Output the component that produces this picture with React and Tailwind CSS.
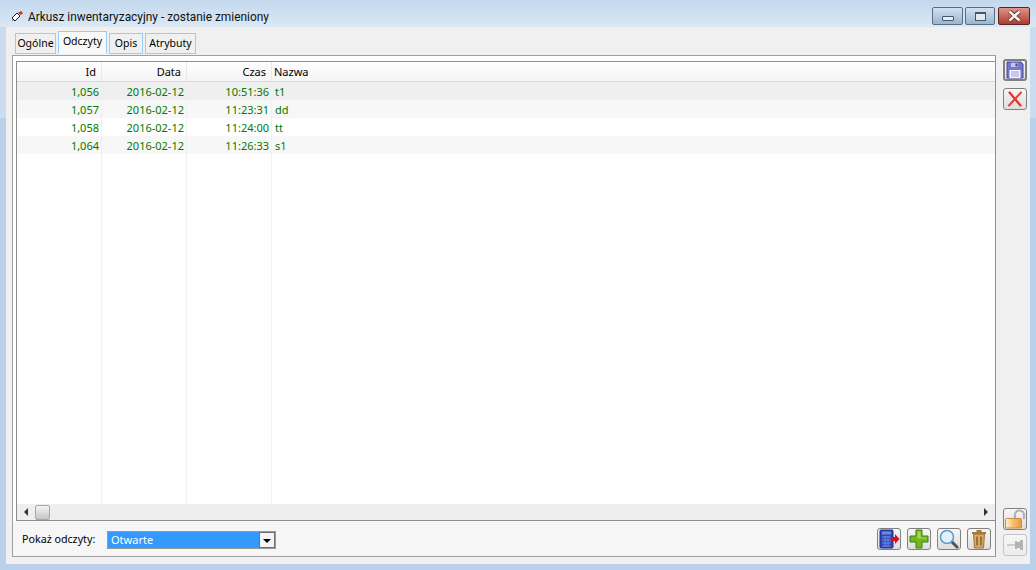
const rows = [
  { id: '1,056', date: '2016-02-12', time: '10:51:36', name: 't1', bg: 'bg-[#efefef]' },
  { id: '1,057', date: '2016-02-12', time: '11:23:31', name: 'dd', bg: 'bg-[#f7f7f7]' },
  { id: '1,058', date: '2016-02-12', time: '11:24:00', name: 'tt', bg: 'bg-white' },
  { id: '1,064', date: '2016-02-12', time: '11:26:33', name: 's1', bg: 'bg-[#f7f7f7]' },
];

const ToolButton = ({ children, className = '' }) => (
  <div
    className={`flex items-center justify-center w-[24px] h-[22px] shrink-0 rounded-[3px] border border-[#808080] bg-gradient-to-b from-[#f6f6f6] to-[#dedede] ${className}`}
  >
    {children}
  </div>
);

const SaveIcon = () => (
  <svg width="18" height="18" viewBox="0 0 18 18">
    <path d="M1 1h14l2 2v14H1z" fill="#7477d2" stroke="#4346a0" />
    <rect x="4.500" y="1.500" width="8" height="5" fill="#c4c6ee" stroke="#5f62b8" strokeWidth="0.6" />
    <rect x="9.500" y="2.500" width="2" height="3" fill="#4346a0" />
    <rect x="3.500" y="9" width="11" height="8" fill="#f6f6fc" />
    <path d="M5 11h8M5 13h8M5 15h8" stroke="#9a9ccd" />
  </svg>
);

const CancelIcon = () => (
  <svg width="16" height="16" viewBox="0 0 16 16">
    <path d="M2.500 1.500l11 13" stroke="#e4322a" strokeWidth="2.200" strokeLinecap="round" />
    <path d="M14 1.500L2 14.500" stroke="#ec3a2e" strokeWidth="1.900" strokeLinecap="round" />
  </svg>
);

const CalcIcon = () => (
  <svg width="21" height="20" viewBox="0 0 21 20">
    <rect x="1" y="1" width="13" height="18" rx="1" fill="#2f46b4" stroke="#1e2f86" />
    <rect x="3" y="2.500" width="9" height="3" fill="#6f86e6" />
    <path d="M3 8h9M3 11h9M3 14h9M3 17h9M6 7v11M9 7v11" stroke="#8096ee" strokeWidth="0.8" />
    <path d="M12 8h4V5l4.500 5-4.500 5v-3h-4z" fill="#d8101c" />
  </svg>
);

const PlusIcon = () => (
  <svg width="20" height="20" viewBox="0 0 20 20">
    <path d="M7 1h6v6h6v6h-6v6H7v-6H1V7h6z" fill="#72b81c" stroke="#3f7f10" />
    <path d="M8.500 2.500h3V8.500h6v1H8.500z" fill="#a4dc50" />
  </svg>
);

const SearchIcon = () => (
  <svg width="20" height="20" viewBox="0 0 20 20">
    <path d="M12.500 12.500l5.500 5.500" stroke="#4b5560" strokeWidth="3" strokeLinecap="round" />
    <circle cx="8" cy="8" r="6.500" fill="#dff1fb" stroke="#5f9bc8" strokeWidth="1.500" />
  </svg>
);

const TrashIcon = () => (
  <svg width="18" height="20" viewBox="0 0 18 20">
    <path d="M6.500 1h5v2h-5zM2 3h14v2H2z" fill="#a27a3c" />
    <path d="M3.500 5h11l-1 14h-9z" fill="#d8a866" stroke="#9c7434" />
    <path d="M7 7.500v9M11 7.500v9" stroke="#8d6529" strokeWidth="1.600" />
  </svg>
);

const LockIcon = () => (
  <svg width="22" height="20" viewBox="0 0 22 20">
    <defs>
      <linearGradient id="lockBody" x1="0" y1="0" x2="1" y2="0">
        <stop offset="0" stopColor="#fff0d6" />
        <stop offset="0.500" stopColor="#f7bd6c" />
        <stop offset="1" stopColor="#ea9a36" />
      </linearGradient>
    </defs>
    <path d="M11 9V6a4.500 4.500 0 0 1 9 0v4" fill="none" stroke="#b0b0b0" strokeWidth="2.200" />
    <rect x="1.500" y="9.500" width="16" height="9.500" rx="1" fill="url(#lockBody)" stroke="#c98d3c" />
  </svg>
);

const PinIcon = () => (
  <svg width="18" height="14" viewBox="0 0 18 14">
    <path d="M1 7h9" stroke="#a9a9a9" />
    <path d="M9 3h2v1h3V2h3v10h-3v-2h-3v1H9z" fill="#b4b4b4" />
  </svg>
);

const MinGlyph = () => <div className="w-[12px] h-[5px] mt-[4px] rounded-[1px] bg-[#e8eef5] border border-[#44566a]" />;

const MaxGlyph = () => (
  <div className="w-[11px] h-[9px] border border-t-2 border-[#44566a] bg-[#e2eaf2]" />
);

const CloseGlyph = () => (
  <svg width="15" height="12" viewBox="0 0 15 12">
    <path d="M2.500 1.500l10 9M12.500 1.500l-10 9" stroke="#5e2320" strokeWidth="4.200" />
    <path d="M2.500 1.500l10 9M12.500 1.500l-10 9" stroke="#f4f4f4" strokeWidth="2.600" />
  </svg>
);

const Tab = ({ label, width, active }) => (
  <div
    className={
      active
        ? 'flex justify-center h-[23px] pt-[2px] border border-[#99ccf8] border-b-[#f8f8f8] bg-[#f8f8f8] text-[10.500px]'
        : 'flex justify-center items-center h-[21px] border border-[#99ccf8] bg-[#f0f0f0] text-[10.500px]'
    }
    style={{ width }}
  >
    {label}
  </div>
);

const ScrollArrow = ({ dir }) => (
  <div
    className={
      dir === 'left'
        ? 'w-0 h-0 border-y-[4px] border-y-transparent border-r-[4px] border-r-[#333333]'
        : 'w-0 h-0 border-y-[4px] border-y-transparent border-l-[4px] border-l-[#333333]'
    }
  />
);

export default function App() {
  return (
    <div className="flex flex-col w-[1036px] h-[570px] overflow-hidden text-black font-['Noto_Sans','Open_Sans',sans-serif] bg-[linear-gradient(#cbdcee_0,#cbdcee_118px,#b9d1ea_118px)]">
      {/* Title bar */}
      <div className="flex items-end h-[27px] shrink-0 pb-[2px] pl-[11px] pr-[6px] bg-gradient-to-b from-[#c3d8ed] to-[#dbe8f4]">
        <svg width="13" height="12" viewBox="0 0 13 12" className="mr-[4px] mb-[2px]">
          <path d="M1 7l5-5 3 3-5 5z" fill="#ffffff" stroke="#222222" />
          <path d="M1 10l2-1-1-1z" fill="#222222" />
          <path d="M7 2l3-2 2 2-2 2z" fill="#c9302c" />
        </svg>
        <span className="font-['Roboto',sans-serif] text-[11.900px] leading-[16px] text-[#111111]">
          Arkusz inwentaryzacyjny - zostanie zmieniony
        </span>
        <div className="flex ml-auto gap-[2px]">
          <div className="flex items-center justify-center w-[31px] h-[18px] rounded-[2px] border border-[#5d6d80] bg-gradient-to-b from-[#d3e2f0] to-[#9ab5cf]">
            <MinGlyph />
          </div>
          <div className="flex items-center justify-center w-[30px] h-[18px] rounded-[2px] border border-[#5d6d80] bg-gradient-to-b from-[#d3e2f0] to-[#9ab5cf]">
            <MaxGlyph />
          </div>
          <div className="flex items-center justify-center w-[32px] h-[18px] ml-[1px] rounded-[2px] border border-[#5e2320] bg-gradient-to-b from-[#e0948a] to-[#a93c30]">
            <CloseGlyph />
          </div>
        </div>
      </div>

      {/* Client area */}
      <div className="flex mx-[6px] h-[537px] bg-[#f0f0f0]">
        <div className="flex flex-col w-[990px] pl-[6px]">
          {/* Tabs */}
          <div className="flex items-end h-[28px] pl-[3px] gap-[2px] pb-[1px] shrink-0">
            <Tab label="Ogólne" width={41} />
            <Tab label="Odczyty" width={49} active />
            <Tab label="Opis" width={34} />
            <Tab label="Atrybuty" width={51} />
          </div>

          {/* Frame */}
          <div className="flex flex-col w-[984px] h-[502px] border border-[#a0a0a0] border-r-[#8d9199] bg-white">
            <div className="h-[5px] shrink-0" />
            <div className="flex flex-col h-[460px] ml-[3px] border border-r-0 border-[#8d8d8d] bg-white">
              {/* Header */}
              <div className="flex h-[20px] shrink-0 text-[11px] leading-[20px] bg-gradient-to-b from-[#ffffff] to-[#f4f4f4] border-b border-[#d9d9d9]">
                <div className="w-[85px] pr-[5px] text-right border-r border-[#e8e8e8]">Id</div>
                <div className="w-[85px] pr-[5px] text-right border-r border-[#e8e8e8]">Data</div>
                <div className="w-[85px] pr-[5px] text-right border-r border-[#e8e8e8]">Czas</div>
                <div className="pl-[2px]">Nazwa</div>
              </div>

              {/* Rows */}
              <div className="flex flex-col flex-1 min-h-0">
                {rows.map((row) => (
                  <div key={row.id} className={`flex h-[18px] shrink-0 text-[11px] leading-[20px] text-[#007a00] ${row.bg}`}>
                    <div className="w-[85px] pr-[2px] text-right border-r border-[#f0f0f0]">{row.id}</div>
                    <div className="w-[85px] pr-[2px] text-right border-r border-[#f0f0f0]">{row.date}</div>
                    <div className="w-[85px] pr-[2px] text-right border-r border-[#f0f0f0]">{row.time}</div>
                    <div className="pl-[3px]">{row.name}</div>
                  </div>
                ))}
                <div className="flex flex-1">
                  <div className="w-[85px] border-r border-[#f0f0f0]" />
                  <div className="w-[85px] border-r border-[#f0f0f0]" />
                  <div className="w-[85px] border-r border-[#f0f0f0]" />
                </div>
              </div>

              {/* Scrollbar */}
              <div className="flex items-center h-[16px] shrink-0 bg-[#eeeeee]">
                <div className="flex justify-center w-[18px]">
                  <ScrollArrow dir="left" />
                </div>
                <div className="w-[15px] h-[15px] rounded-[2px] border border-[#a8a8a8] bg-gradient-to-b from-[#f3f3f3] to-[#c6c6c6]" />
                <div className="flex justify-center w-[18px] ml-auto">
                  <ScrollArrow dir="right" />
                </div>
              </div>
            </div>

            {/* Footer */}
            <div className="flex items-center flex-1 pt-[1px] pl-[9px] pr-[4px] bg-[#f6f6f6]">
              <span className="text-[10.700px] w-[85px] mt-[1px]">Pokaż odczyty:</span>
              <div className="flex items-center w-[169px] h-[18px] mt-[1px] border border-[#9a9a9a] bg-[#3399ff]">
                <span className="pl-[3px] pt-[1px] text-[11px] text-white">Otwarte</span>
                <div className="flex items-end justify-center ml-auto w-[16px] h-full pb-[4px] bg-[#f4f4f4] border border-[#707070]">
                  <div className="w-0 h-0 border-x-[4px] border-x-transparent border-t-[4px] border-t-black" />
                </div>
              </div>
              <div className="flex ml-auto gap-[6px]">
                <ToolButton><CalcIcon /></ToolButton>
                <ToolButton><PlusIcon /></ToolButton>
                <ToolButton><SearchIcon /></ToolButton>
                <ToolButton><TrashIcon /></ToolButton>
              </div>
            </div>
          </div>
        </div>

        {/* Side toolbar */}
        <div className="flex flex-col flex-1 pl-[7px] pt-[32px] pb-[8px]">
          <ToolButton className="border-2 border-[#3fb1e6] from-[#e4f1fb] to-[#cfe4f7]"><SaveIcon /></ToolButton>
          <ToolButton className="mt-[7px]"><CancelIcon /></ToolButton>
          <ToolButton className="mt-auto"><LockIcon /></ToolButton>
          <ToolButton className="mt-[4px] border-[#c4c4c4] from-[#f2f2f2] to-[#ececec]"><PinIcon /></ToolButton>
        </div>
      </div>
    </div>
  );
}
